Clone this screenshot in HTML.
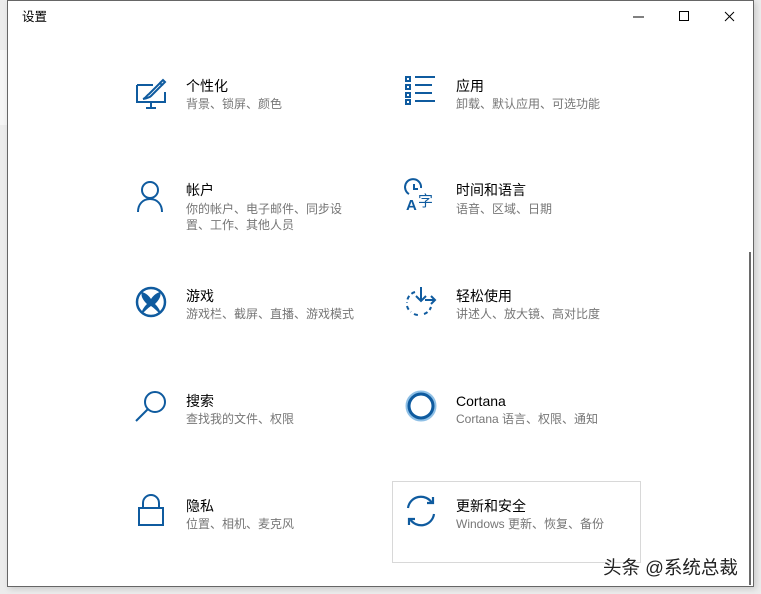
<!DOCTYPE html>
<html><head><meta charset="utf-8"><style>
body{margin:0;width:761px;height:594px;background:#ececec;position:relative;overflow:hidden;font-family:"Liberation Sans","Noto Sans CJK SC",sans-serif}
.win{position:absolute;left:7px;top:0;width:745px;height:585px;background:#fff;border:1px solid #666;box-shadow:2px 2px 6px rgba(0,0,0,.15)}
.t{position:absolute;font-size:14px;color:#000;line-height:18px;white-space:nowrap}
.s{position:absolute;font-size:12px;color:#767676;line-height:16px;white-space:nowrap}
svg.i{position:absolute;overflow:visible}
</style></head><body>
<div style="position:absolute;left:0;top:50px;width:7px;height:75px;background:#f5f5f5"></div>
<div class="win"></div>
<div class="t" style="left:22px;top:8px;font-size:12.5px">设置</div>
<svg class="i" style="left:630px;top:10px" width="120" height="14"><line x1="3" y1="7" x2="14" y2="7" stroke="#000"/><rect x="49.5" y="1.5" width="9" height="9" fill="none" stroke="#000"/><path d="M95 2l9 9M104 2l-9 9" stroke="#000"/></svg>
<div style="position:absolute;left:749px;top:252px;width:2px;height:333px;background:#6a6a6a"></div>
<div style="position:absolute;left:392px;top:481px;width:247px;height:80px;border:1px solid #d8d8d8"></div>

<svg class="i" style="left:136px;top:79px" width="32" height="30" fill="none" stroke="#0f5b9f" stroke-width="2"><path d="M1 6h16M1 6v17h28v-10"/><path d="M15 29v-6M10 29h10" /><path d="M7 20c3-1 4-4 6-5l11-11 2 2-11 11c-1 1-3 2-8 3z"/><path d="M24 4l3-3 2 2-3 3"/></svg>
<div class="t" style="left:186px;top:77px">个性化</div><div class="s" style="left:186px;top:96px">背景、锁屏、颜色</div>

<svg class="i" style="left:405px;top:76px" width="32" height="28" fill="none" stroke="#0f5b9f" stroke-width="2"><rect x="1" y="1" width="4" height="4"/><rect x="1" y="9" width="4" height="4"/><rect x="1" y="17" width="4" height="4"/><rect x="1" y="24" width="4" height="4"/><path d="M10 1h20M10 9h17M10 17h17M10 25h20"/></svg>
<div class="t" style="left:456px;top:77px">应用</div><div class="s" style="left:456px;top:96px">卸载、默认应用、可选功能</div>

<svg class="i" style="left:137px;top:181px" width="28" height="32" fill="none" stroke="#0f5b9f" stroke-width="2"><circle cx="13" cy="9" r="8"/><path d="M1 31c0-8 5-13 12-13s12 5 12 13"/></svg>
<div class="t" style="left:186px;top:181px">帐户</div><div class="s" style="left:186px;top:201px">你的帐户、电子邮件、同步设</div><div class="s" style="left:186px;top:217px">置、工作、其他人员</div>

<svg class="i" style="left:405px;top:180px" width="32" height="32" fill="none" stroke="#0f5b9f" stroke-width="2"><path d="M4 14a8 8 0 1 1 12-6"/><path d="M9 4v5h4"/><text x="1" y="30" font-size="15" fill="#0f5b9f" stroke="none" font-weight="bold" font-family="Liberation Sans">A</text><text x="13" y="26" font-size="15" fill="#0f5b9f" stroke="none" font-family="Noto Sans CJK SC">字</text></svg>
<div class="t" style="left:456px;top:181px">时间和语言</div><div class="s" style="left:456px;top:201px">语音、区域、日期</div>

<svg class="i" style="left:135px;top:286px" width="32" height="32"><circle cx="16" cy="16" r="14" fill="none" stroke="#0f5b9f" stroke-width="2.5"/><path d="M7 6c4 1 7 4 9 7 2-3 5-6 9-7 2 5-3 10-5 12 3 3 6 7 5 10-3-3-6-6-9-8-3 2-6 5-9 8-1-3 2-7 5-10-2-2-7-7-5-12z" fill="#0f5b9f"/></svg>
<div class="t" style="left:186px;top:287px">游戏</div><div class="s" style="left:186px;top:306px">游戏栏、截屏、直播、游戏模式</div>

<svg class="i" style="left:405px;top:286px" width="32" height="30" fill="none" stroke="#0f5b9f" stroke-width="2"><path d="M16 1v14M11 10l5 5 5-5M20 14h10M26 10l4 4-4 4"/><path d="M10 6a11 11 0 0 0 -8 11M2 20a11 11 0 0 0 4 6M9 28a11 11 0 0 0 6 1M19 28a11 11 0 0 0 7-7" stroke-dasharray="4 3"/></svg>
<div class="t" style="left:456px;top:287px">轻松使用</div><div class="s" style="left:456px;top:306px">讲述人、放大镜、高对比度</div>

<svg class="i" style="left:135px;top:390px" width="32" height="32" fill="none" stroke="#0f5b9f" stroke-width="2"><circle cx="20" cy="12" r="10"/><path d="M13 19l-12 12"/></svg>
<div class="t" style="left:186px;top:392px">搜索</div><div class="s" style="left:186px;top:411px">查找我的文件、权限</div>

<svg class="i" style="left:405px;top:390px" width="32" height="32"><circle cx="16" cy="16" r="13" fill="none" stroke="#8fc0e6" stroke-width="5"/><circle cx="16" cy="16" r="12" fill="none" stroke="#0f5b9f" stroke-width="3"/></svg>
<div class="t" style="left:456px;top:392px">Cortana</div><div class="s" style="left:456px;top:411px">Cortana 语言、权限、通知</div>

<svg class="i" style="left:138px;top:495px" width="26" height="32" fill="none" stroke="#0f5b9f" stroke-width="2"><path d="M5 13V8a8 8 0 0 1 16 0v5"/><rect x="1" y="13" width="24" height="17"/></svg>
<div class="t" style="left:186px;top:497px">隐私</div><div class="s" style="left:186px;top:516px">位置、相机、麦克风</div>

<svg class="i" style="left:405px;top:495px" width="32" height="32" fill="none" stroke="#0f5b9f" stroke-width="2.2"><path d="M3 13A13 13 0 0 1 27 8"/><path d="M22 8h6V2"/><path d="M29 19A13 13 0 0 1 5 24"/><path d="M10 24H4v6"/></svg>
<div class="t" style="left:456px;top:497px">更新和安全</div><div class="s" style="left:456px;top:516px">Windows 更新、恢复、备份</div>

<div class="t" style="left:603px;top:557px;font-size:18.5px;line-height:22px;color:#222;text-shadow:0 0 2px #fff,0 0 2px #fff">头条 @系统总裁</div>
</body></html>
